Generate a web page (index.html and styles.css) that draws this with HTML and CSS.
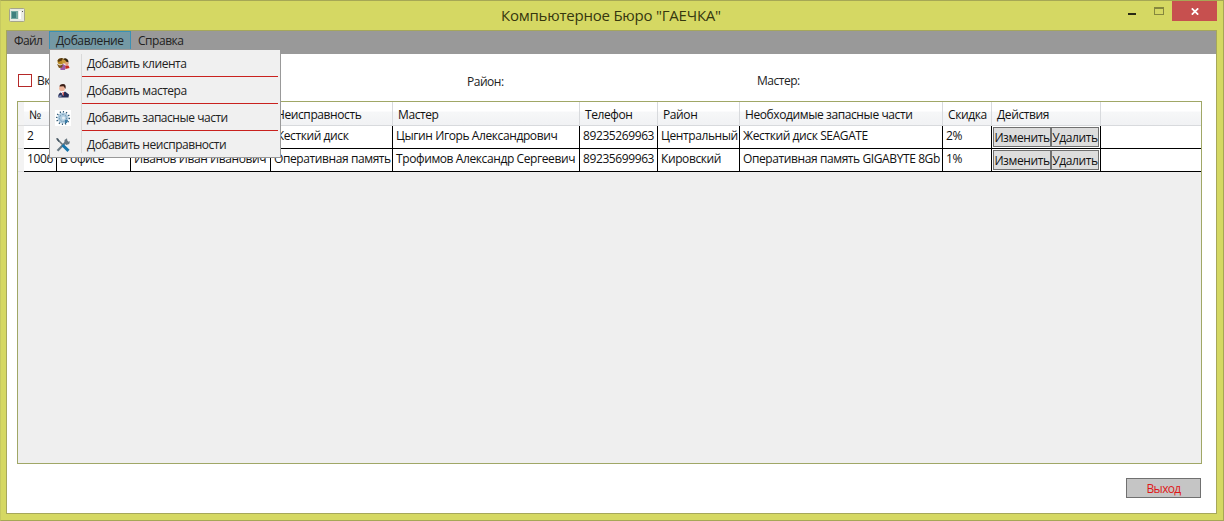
FILE: index.html
```html
<!DOCTYPE html>
<html lang="ru">
<head>
<meta charset="utf-8">
<title>Компьютерное Бюро "ГАЕЧКА"</title>
<link rel="stylesheet" href="styles.css">
</head>
<body>
<div class="window">
  <header class="titlebar">
    <svg class="app-icon" width="16" height="14" viewBox="0 0 16 14">
      <rect x=".5" y=".5" width="15" height="13" rx="1" fill="#e9ebe3" stroke="#a5a58b"/>
      <path d="M2 3h7v8H2z" fill="#74a9a1"/><path d="M3 4h4v6H3z" fill="#3f807f"/>
      <path d="M10 3h2v8h-2z" fill="#fff"/><path d="M13 3h1v1h-1z" fill="#555"/>
    </svg>
    <h1 class="title">Компьютерное Бюро "ГАЕЧКА"</h1>
    <div class="controls">
      <span class="minimize"></span>
      <span class="maximize"></span>
      <span class="close"><svg width="8" height="7" viewBox="0 0 8 7"><path d="M.8.3 7.2 6.7M7.2.3.8 6.7" stroke="#fff" stroke-width="1.7"/></svg></span>
    </div>
  </header>
  <main class="client">
    <nav class="menubar">
      <span class="menu menu-file">Файл</span>
      <span class="menu menu-add">Добавление</span>
      <span class="menu menu-help">Справка</span>
    </nav>
    <section class="filters">
      <span class="check"></span><span class="label-check">Вк</span>
      <span class="label-district">Район:</span>
      <span class="label-master">Мастер:</span>
    </section>
    <section class="grid">
      <div class="row head">
        <i class="corner"></i><span>№</span><span></span><span></span><span>Неисправность</span><span>Мастер</span><span>Телефон</span><span>Район</span><span>Необходимые запасные части</span><span>Скидка</span><span>Действия</span><span class="rest"></span>
      </div>
      <div class="row">
        <i class="corner"></i><span>2</span><span></span><span></span><span>Жесткий диск</span><span>Цыгин Игорь Александрович</span><span>89235269963</span><span>Центральный</span><span>Жесткий диск SEAGATE</span><span>2%</span><span class="actions"><button class="edit">Изменить</button><button class="remove">Удалить</button></span><span class="rest"></span>
      </div>
      <div class="row">
        <i class="corner"></i><span>1006</span><span>В офисе</span><span>Иванов Иван Иванович</span><span>Оперативная память</span><span>Трофимов Александр Сергеевич</span><span>89235699963</span><span>Кировский</span><span>Оперативная память GIGABYTE 8Gb</span><span>1%</span><span class="actions"><button class="edit">Изменить</button><button class="remove">Удалить</button></span><span class="rest"></span>
      </div>
    </section>
    <footer class="footer"><button class="exit">Выход</button></footer>
  </main>
  <div class="dropdown">
    <div class="item">
      <svg width="14" height="14" viewBox="0 0 14 14"><circle cx="4.500" cy="4.500" r="3" fill="#b98a25"/><path d="M1.500 3.500q1-3 5-2.500l1 2-3 1-2 1z" fill="#5b3d11"/><circle cx="8.500" cy="4" r="2.600" fill="#c89a3c"/><path d="M7 2q4-2 5.500 2L12 7 9.500 3.500z" fill="#30240f"/><circle cx="10.800" cy="6.500" r="1.800" fill="#e4a07a"/><path d="M4 9l3-2 3 2-1 4H4.500z" fill="#9a5ba8"/><path d="M9.500 8.500l3 0 1 2.500-4 1z" fill="#c5281e"/><path d="M1 7l3 1.500 3-1-1 3-3 .5z" fill="#7b5418"/></svg>
      <span>Добавить клиента</span>
    </div>
    <div class="item">
      <svg width="14" height="14" viewBox="0 0 14 14"><circle cx="6" cy="4.200" r="2.900" fill="#f0b59a"/><path d="M3.500 2.500q0-2.500 3.500-2.500 3.500 0 2.500 5L7.500 2.200z" fill="#3c2018"/><path d="M2.500 13.500q-1-3 2-5l2 1 2.500-2 4 3-.5 3z" fill="#252c55"/><path d="M5 7.500l2.200 4.500.8-5z" fill="#fff"/><path d="M6.500 8h1l.4 3-.9 1z" fill="#c33"/><path d="M2.500 12l3-1.500v2.500H3z" fill="#6e80ae"/></svg>
      <span>Добавить мастера</span>
    </div>
    <div class="item">
      <svg width="16" height="16" viewBox="0 0 16 16"><path d="M0 0h16v16H0z" fill="#fff"/><circle cx="8" cy="8" r="5.500" fill="#b0cde1"/><circle cx="8" cy="8" r="6.300" fill="none" stroke="#345d78" stroke-width="1.500" stroke-dasharray="1.200 2"/><circle cx="8" cy="8" r="3.500" fill="none" stroke="#7299b3" stroke-dasharray="2 1"/><circle cx="8.500" cy="8" r="1.500" fill="#e5eff5"/><path d="M10 10l3 0-1 3-2 0z" fill="#397ba5"/></svg>
      <span>Добавить запасные части</span>
    </div>
    <div class="item">
      <svg width="14" height="14" viewBox="0 0 14 14"><path d="M1.500 12.800 10 4" stroke="#697a85" stroke-width="2.200"/><path d="M8.500 5V2L11 .3l.3 2.200 1.200 1.200 1.500-.5-.8 2.800-3 1z" fill="#687780"/><path d="M1 1l6 6" stroke="#66757d" stroke-width="1.600"/><path d="M6.500 7 12.500 12.800" stroke="#1676ad" stroke-width="3"/><path d="M0 .3h2L3.500 3 2.500 4z" fill="#475763"/></svg>
      <span>Добавить неисправности</span>
    </div>
  </div>
</div>
</body>
</html>
```
FILE: styles.css
```css
* { box-sizing: border-box; }
body { margin: 0; overflow: hidden; font: 12px/16px "Open Sans", "Noto Sans", sans-serif; letter-spacing: -.47px; color: #222; }
button { font: inherit; padding: 0; margin: 0; border-radius: 0; white-space: nowrap; }
.window { position: relative; width: 1224px; height: 521px; background: #d5d863; border: 1px solid #a6a755; border-left-color: #c6c960; padding: 0 6px 6px 5px; }
.titlebar { height: 29px; display: flex; align-items: flex-start; }
.app-icon { margin: 7px 0 0 3px; }
.title { flex: 1; margin: 4px 0 0 476px; font-size: 15px; line-height: 20px; font-weight: 400; letter-spacing: -.22px; color: #36370f; white-space: nowrap; }
.controls { display: flex; }
.minimize { width: 8px; height: 2px; background: #292a14; margin: 12px 18px 0 0; }
.maximize { width: 10px; height: 8px; border: 1px solid #85873e; border-top-width: 2px; margin: 6px 8px 0 0; }
.close { width: 45px; height: 20px; background: #c7504f; display: grid; place-items: center; }
.client { height: 484px; border: 1px solid #a6a75b; background: #fff; display: flex; flex-direction: column; }
.menubar { height: 23px; background: #999; display: flex; flex: none; }
.menu { height: 19px; line-height: 20px; white-space: nowrap; color: #222; }
.menu-file { width: 42px; padding-left: 7px; letter-spacing: -.65px; }
.menu-add { width: 82px; padding-left: 6px; line-height: 18px; background: #7499a5; border: 1px solid #3c91b4; letter-spacing: -.4px; }
.menu-help { padding-left: 7px; }
.filters { height: 47px; flex: none; display: flex; align-items: flex-start; padding: 20px 0 0 11px; }
.check { width: 14px; height: 13px; border: 1px solid #b52929; }
.label-check { width: 435px; padding-left: 5px; line-height: 14px; }
.label-district { width: 290px; line-height: 16px; }
.label-master { line-height: 14px; }
.grid { width: 1185px; height: 363px; margin-left: 10px; border: 1px solid #a0a766; background: #efefef; flex: none; overflow: hidden; }
.row { display: grid; grid-template-columns: 6px 33px 74px 140px 122px 187px 78px 82px 203px 49px 109px 100px; height: 23px; color: #111; letter-spacing: -.4px; }
.row > span { background: #fff; border-right: 1px solid #000; border-bottom: 1px solid #000; padding: 2px 0 0 3px; overflow: hidden; white-space: nowrap; }
.row > .rest { border-right: 0; }
.corner { background: #f3f3f3; border-bottom: 1px solid #ddd; }
.row.head { height: 24px; }
.row.head > span { background: linear-gradient(#fff 0 38%, #f6f7f8 45%, #f1f2f4); border-color: #d8dadd; padding: 5px 0 0 5px; }
.row > .actions { display: flex; padding: 1px 1px 0; }
.actions button { height: 20px; border: 1px solid #707070; background: #ddd; color: #111; line-height: 20px; letter-spacing: -.4px; }
.edit { width: 58px; }
.remove { width: 48px; }
.footer { padding: 14px 15px 0 0; display: flex; justify-content: flex-end; }
.exit { width: 75px; height: 20px; background: #c5c5c5; border: 1px solid #707070; color: #e01818; line-height: 19px; letter-spacing: -.7px; }
.dropdown { position: absolute; left: 48px; top: 48px; width: 232px; height: 109px; border: 1px solid #999; background: linear-gradient(#d9d9d9, #d9d9d9) 31px 4px / 1px 99px no-repeat #f0f0f0; }
.item { height: 27px; display: grid; grid-template-columns: 26px 1fr; align-items: center; }
.item svg { justify-self: center; }
.item span { margin: 0 2px 0 6px; padding-left: 5px; height: 27px; line-height: 28px; border-bottom: 1px solid #c9211e; white-space: nowrap; }
.item:last-child span { border-bottom: 0; }
```
